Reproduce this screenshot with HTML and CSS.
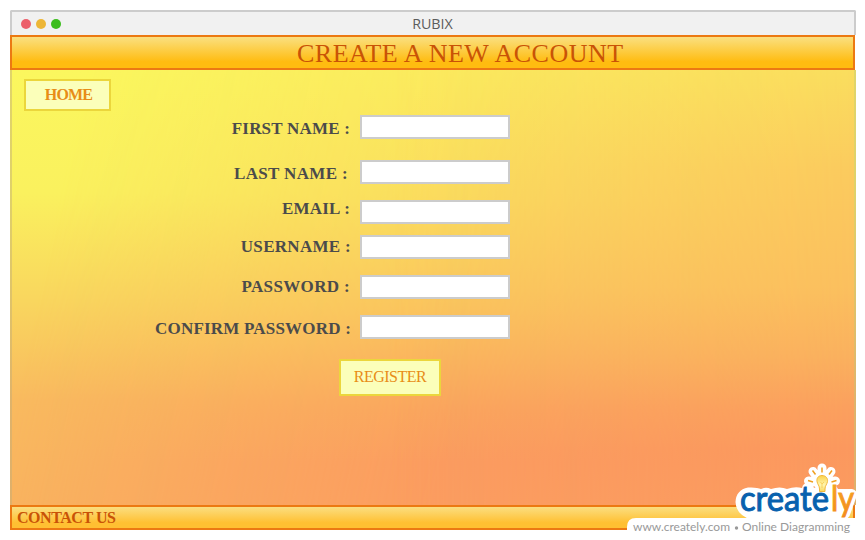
FILE: index.html
```html
<!DOCTYPE html>
<html lang="en">
<head>
<meta charset="utf-8">
<title>RUBIX</title>
<link rel="stylesheet" href="styles.css">
</head>
<body>
<div class="window">
  <header class="titlebar">
    <div class="dots"><i class="dot red"></i><i class="dot amber"></i><i class="dot green"></i></div>
    <span class="title">RUBIX</span>
  </header>
  <h1 class="banner"><span>CREATE A NEW ACCOUNT</span></h1>
  <main class="content">
    <button class="btn home">HOME</button>
    <form class="form">
      <div class="row first"><label for="a">FIRST NAME :</label><input id="a"></div>
      <div class="row last"><label for="b">LAST NAME :</label><input id="b"></div>
      <div class="row email"><label for="c">EMAIL :</label><input id="c"></div>
      <div class="row user"><label for="d">USERNAME :</label><input id="d"></div>
      <div class="row pass"><label for="e">PASSWORD :</label><input id="e"></div>
      <div class="row confirm"><label for="f">CONFIRM PASSWORD :</label><input id="f"></div>
      <button class="btn register" type="button">REGISTER</button>
    </form>
  </main>
  <footer class="footer"><span>CONTACT US</span></footer>
</div>
<svg class="badge" width="238" height="80" viewBox="627 460 238 80">
  <defs>
    <linearGradient id="bulb" x2="0" y2="1"><stop offset="0" stop-color="#fbd24a"/><stop offset=".6" stop-color="#fff6b0"/><stop offset="1" stop-color="#f9d65c"/></linearGradient>
    <linearGradient id="ly" x2="0" y2="1"><stop offset="0" stop-color="#f7a823"/><stop offset="1" stop-color="#f28a1e"/></linearGradient>
  </defs>
  <path d="M636 518H856V540H627V527Q627 518 636 518Z" fill="#fff"/>
  <path d="M748 487.500Q757 487 761 489Q766 486.500 771 489Q780 486 787 489Q795 486 802 488Q803 482.500 809 483Q813 484 814 488L822 484H835L838 489H852Q859 491 856 498L851 512Q849 520 842 520H752Q736 515 735.500 502Q736 490 748 487.500Z" fill="#fff"/>
  <path d="M822 468V472M813 471.500L815.500 475M831 471.500L828.500 475M808.500 481L813 482M835.500 481L831 482M822 477V492" stroke="#fff" stroke-width="9" stroke-linecap="round"/>
  <circle cx="822" cy="480" r="10" fill="#fff"/>
  <text class="wordmark create" x="740" y="511" textLength="89" lengthAdjust="spacingAndGlyphs">create</text>
  <text class="wordmark ly" x="831" y="511" textLength="23" lengthAdjust="spacingAndGlyphs">ly</text>
  <path d="M822 467.500V472.500M812.500 470.500L815.500 474.500M832 470.500L829 474.500M808 480.500L813 482M836.500 480.500L831.500 482" stroke="#f0a020" stroke-width="1.500"/>
  <path d="M822 475.500C826 475.500 828 478.500 827.500 481.500C827 484.500 825 485.500 825 489V491.500H819.500V489C819.500 485.500 817.500 484.500 817 481.500C816.500 478.500 818 475.500 822 475.500Z" fill="url(#bulb)" stroke="#f3b73a"/>
  <path d="M820.500 482L822 484L824 482M822 484V488" stroke="#f6c445" stroke-width=".7" fill="none"/>
  <text class="tag" x="633" y="531" textLength="97" lengthAdjust="spacingAndGlyphs">www.creately.com</text>
  <circle cx="736.500" cy="528" r="1.700" fill="#999"/>
  <text class="tag" x="742" y="531" textLength="108" lengthAdjust="spacingAndGlyphs">Online Diagramming</text>
</svg>
</body>
</html>
```
FILE: styles.css
```css
* { box-sizing: border-box; }
body { margin: 0; width: 865px; height: 540px; overflow: hidden; background: #fff; font-family: "Liberation Serif", serif; }
.window { width: 846px; height: 520px; margin: 10px 0 0 10px; display: flex; flex-direction: column; }
.titlebar { height: 25px; border: 2px solid #ccc; border-bottom: 0; border-radius: 2px 2px 0 0; background: #f1f1f1; display: grid; grid-template-columns: 1fr auto 1fr; align-items: center; }
.dots { display: flex; gap: 5px; padding-left: 9px; }
.dot { width: 10px; height: 10px; border-radius: 50%; }
.red { background: #ec5f6b; }
.amber { background: #edb637; }
.green { background: #3bbd1c; }
.title { font: 14.3px/20px "Open Sans", sans-serif; color: #5c5c5c; margin-right: 1px; }
.banner { width: 845px; height: 35px; margin: 0; border: 2px solid #ec7912; background: linear-gradient(#fae080, #ffbc10 80%); display: flex; align-items: center; padding: 2px 0 0 285px; font-weight: 400; font-size: 26px; line-height: 31px; color: #c95306; }
.banner span { letter-spacing: .5px; white-space: nowrap; }
.content { position: relative; height: 435px; flex: none; border: solid rgba(190,170,120,.45); border-width: 0 2px; background-color: #fad05e; background-image: linear-gradient(#fbf75e 0, #faf15e 28%, #f9d65e 53%, #f9ba5f 76%, #f9b45f); background-origin: border-box; display: flex; align-items: flex-start; isolation: isolate; }
.content::before, .content::after { content: ""; position: absolute; inset: 0; z-index: -1; }
.content::before { background: linear-gradient(#fbe95e 0, #fada5e 30%, #fac35e 55%, #faa55e 78%, #fb9c60 90%, #fb9d60); mask-image: linear-gradient(102deg, transparent 8%, rgba(0,0,0,.6) 32%, #000 55%); }
.content::after { background: linear-gradient(#fadd5e 0, #fbca5e 23%, #fbbf5e 50%, #fab05e 66%, #fb9f5e 78%, #fb985e 87%, #fb9b60); mask-image: linear-gradient(to right, transparent 45%, #000); }
.btn { font-family: inherit; background: #fbffba; border: 2px solid #ebd63c; color: #e88d17; padding: 0; }
.home { width: 87px; height: 32px; margin: 9px 0 0 12px; padding-left: 2px; font-size: 16px; font-weight: 700; letter-spacing: -.8px; }
.form { width: 399px; margin: 45px 0 0; display: flex; flex-direction: column; }
.row { display: flex; height: 24px; align-items: center; justify-content: flex-end; }
.row label { font-size: 17px; line-height: 20px; font-weight: 700; color: #4b4b4b; letter-spacing: .2px; white-space: nowrap; margin-right: 9px; position: relative; }
.row input { width: 150px; height: 24px; margin: 0; padding: 0 4px; border: 2px solid #ccc; background: #fff; border-radius: 0; flex: none; }
.row.first label { margin-right: 10px; top: 2px; }
.last { margin-top: 21px; }
.row.last label { margin-right: 12px; top: 2px; }
.email { margin-top: 16px; }
.row.email label { margin-right: 10px; top: -3px; }
.user { margin-top: 11px; }
.row.user label { top: 0; letter-spacing: .3px; }
.pass { margin-top: 16px; }
.row.pass label { margin-right: 10px; top: 0; }
.row.pass label, .row.last label { letter-spacing: .35px; }
.confirm { margin-top: 16px; }
.row.confirm label { top: 2px; }
.register { align-self: flex-end; width: 102px; height: 37px; margin: 20px 69px 0 0; padding-bottom: 2px; font-size: 16px; letter-spacing: -.5px; }
.footer { width: 845px; height: 25px; flex: none; border: 2px solid #ec7912; background: linear-gradient(#fbde80, #ffc032 75%); padding-left: 5px; display: flex; align-items: center; font-weight: 700; font-size: 16px; line-height: 21px; color: #c95306; letter-spacing: -.45px; }
.badge { position: absolute; left: 627px; top: 460px; }
.wordmark { font: 400 34px Lato, sans-serif; stroke-width: 1px; }
.create { fill: #0861ae; stroke: #0861ae; }
.ly { fill: url(#ly); stroke: url(#ly); }
.tag { font: 12px Lato, sans-serif; fill: #999; }
```
